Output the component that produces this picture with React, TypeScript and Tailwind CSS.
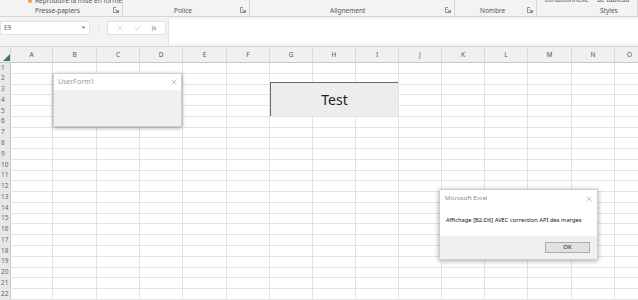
import React from 'react';

const font = { fontFamily: '"Noto Sans", "Open Sans", Arial, sans-serif' };

// column widths, row header first
const cols = [
  { name: '', w: 'w-[11px]' },
  { name: 'A', w: 'w-[42px]' },
  { name: 'B', w: 'w-[44px]' },
  { name: 'C', w: 'w-[43px]' },
  { name: 'D', w: 'w-[43px]' },
  { name: 'E', w: 'w-[44px]' },
  { name: 'F', w: 'w-[43px]' },
  { name: 'G', w: 'w-[43px]' },
  { name: 'H', w: 'w-[43px]' },
  { name: 'I', w: 'w-[43px]' },
  { name: 'J', w: 'w-[43px]' },
  { name: 'K', w: 'w-[43px]' },
  { name: 'L', w: 'w-[43px]' },
  { name: 'M', w: 'w-[44px]' },
  { name: 'N', w: 'w-[43px]' },
  { name: 'O', w: 'w-[30px]' },
];

const rows = Array.from({ length: 22 }, (_, i) => i + 1);

const ribbonGroups = [
  { label: 'Presse-papiers', w: 'w-[123px]', pad: 'pl-[35px]', launcher: true },
  { label: 'Police', w: 'w-[127px]', pad: 'pl-[51px]', launcher: true },
  { label: 'Alignement', w: 'w-[205px]', pad: 'pl-[80px]', launcher: true },
  { label: 'Nombre', w: 'w-[82px]', pad: 'pl-[25px]', launcher: true },
  { label: 'Styles', w: 'w-[101px]', pad: 'pl-[63px]', launcher: false },
];

const Launcher = () => (
  <svg width="6" height="6" viewBox="0 0 6 6" className="shrink-0">
    <path d="M0.5 0.5H3M0.5 0.5V5.5H5.5V3" stroke="#777" strokeWidth="0.8" fill="none" />
    <path d="M2 2L5 5M5 3V5H3" stroke="#777" strokeWidth="0.8" fill="none" />
  </svg>
);

const CloseX = ({ size = 7, color = '#999' }: { size?: number; color?: string }) => (
  <svg width={size} height={size} viewBox="0 0 10 10">
    <path d="M1 1L9 9M9 1L1 9" stroke={color} strokeWidth="1" />
  </svg>
);

export default function App() {
  return (
    <div className="relative w-[638px] h-[300px] overflow-hidden bg-[#f3f3f3] text-[#444]" style={font}>
      {/* Ribbon (bottom part) */}
      <div className="relative h-[17px] flex border-b border-[#d6d6d6] bg-[#f3f3f3]">
        <div className="absolute left-[28px] top-[-4px] flex items-center gap-[3px] text-[6.5px] text-[#555]">
          <span className="w-[4px] h-[4px] rounded-full bg-[#e9a23b]" />
          <span>Reproduire la mise en forme</span>
        </div>
        <div className="absolute left-[545px] top-[-5px] text-[6.5px] text-[#555]">conditionnelle</div>
        <div className="absolute left-[597px] top-[-5px] text-[6.5px] text-[#555]">de tableau</div>
        {ribbonGroups.map((g) => (
          <div key={g.label} className={`${g.w} ${g.pad} h-full flex items-end pb-[2px] border-r border-[#d6d6d6]`}>
            <span className="text-[6.5px] leading-none text-[#555] flex-1">{g.label}</span>
            {g.launcher && <span className="mr-[3px] mb-[1px]"><Launcher /></span>}
          </div>
        ))}
      </div>

      {/* Formula bar */}
      <div className="h-[30px] flex items-start pt-[4px] border-b border-[#d6d6d6]">
        <div className="w-[90px] h-[14px] bg-white border border-[#e2e2e2] flex items-center px-[3px] text-[6.5px] text-[#666]">
          <span className="flex-1">E9</span>
          <svg width="5" height="4" viewBox="0 0 5 4"><path d="M0.5 0.5L2.5 3L4.5 0.5Z" fill="#888" /></svg>
        </div>
        <div className="w-[17px] h-[14px] flex items-center justify-center text-[7px] text-[#bbb]">⋮</div>
        <div className="w-[59px] h-[14px] bg-white border border-[#e2e2e2] flex items-center justify-around px-[3px]">
          <CloseX size={6} color="#c4c4c4" />
          <svg width="7" height="6" viewBox="0 0 10 8"><path d="M1 4L4 7L9 1" stroke="#c4c4c4" strokeWidth="1" fill="none" /></svg>
          <span className="text-[6.5px] italic text-[#666]" style={{ fontFamily: '"Liberation Serif", serif' }}>fx</span>
        </div>
        <div className="ml-[2px] flex-1 h-[25px] -mt-[2px] bg-white border-l border-[#e2e2e2]" />
      </div>

      {/* Grid */}
      <div className="bg-white">
        <div className="flex h-[16px] bg-[#f0f0f0] border-b border-[#c8c8c8]">
          {cols.map((c, i) => (
            <div
              key={i}
              className={`${c.w} shrink-0 h-full flex items-center justify-center text-[6.5px] text-[#555] border-r border-[#d9d9d9]`}
            >
              {i === 0 ? (
                <svg width="7" height="7" viewBox="0 0 7 7" className="self-end mb-[1px] ml-[2px]">
                  <path d="M7 0V7H0Z" fill="#3f7a52" />
                </svg>
              ) : (
                c.name
              )}
            </div>
          ))}
        </div>
        {rows.map((r) => (
          <div key={r} className="flex h-[10.78px] border-b border-[#e3e3e3]">
            {cols.map((c, i) =>
              i === 0 ? (
                <div
                  key={i}
                  className={`${c.w} shrink-0 bg-[#e8e8e8] border-r border-[#c8c8c8] flex items-center pl-[1px] text-[6.5px] leading-none text-[#666]`}
                >
                  {r}
                </div>
              ) : (
                <div key={i} className={`${c.w} shrink-0 border-r border-[#e3e3e3]`} />
              )
            )}
          </div>
        ))}
      </div>

      {/* UserForm1 */}
      <div className="absolute left-[53px] top-[73px] w-[129px] h-[54px] flex flex-col bg-white border border-[#cfcfcf] shadow-[0_1px_4px_rgba(0,0,0,0.35)]">
        <div className="h-[16px] flex items-center justify-between px-[4px]">
          <span className="text-[7px] text-[#9a9a9a]">UserForm1</span>
          <CloseX size={6} color="#9a9a9a" />
        </div>
        <div className="flex-1 bg-[#f0f0f0]" />
      </div>

      {/* Test button */}
      <div className="absolute left-[270px] top-[82px] w-[128px] h-[34px] bg-[#ededed] border-t border-l border-[#6a6a6a] flex items-center justify-center">
        <span className="text-[14px] text-[#222]">Test</span>
      </div>

      {/* Message box */}
      <div className="absolute left-[439px] top-[189px] w-[159px] h-[71px] flex flex-col bg-white border border-[#cfcfcf] shadow-[0_1px_5px_rgba(0,0,0,0.35)]">
        <div className="h-[16px] flex items-center justify-between px-[5px] pt-[1px]">
          <span className="text-[6px] text-[#8a8a8a]">Microsoft Excel</span>
          <CloseX size={6} color="#9a9a9a" />
        </div>
        <div className="flex-1 flex items-center px-[6px] pb-[2px]">
          <span className="text-[5.8px] text-[#111] whitespace-nowrap">Affichage [B2:D6] AVEC correction API des marges</span>
        </div>
        <div className="h-[23px] bg-[#f0f0f0] flex items-center justify-end pr-[7px]">
          <div className="w-[45px] h-[11px] bg-[#e1e1e1] border border-[#adadad] flex items-center justify-center text-[6px] text-[#111]">
            OK
          </div>
        </div>
      </div>
    </div>
  );
}
